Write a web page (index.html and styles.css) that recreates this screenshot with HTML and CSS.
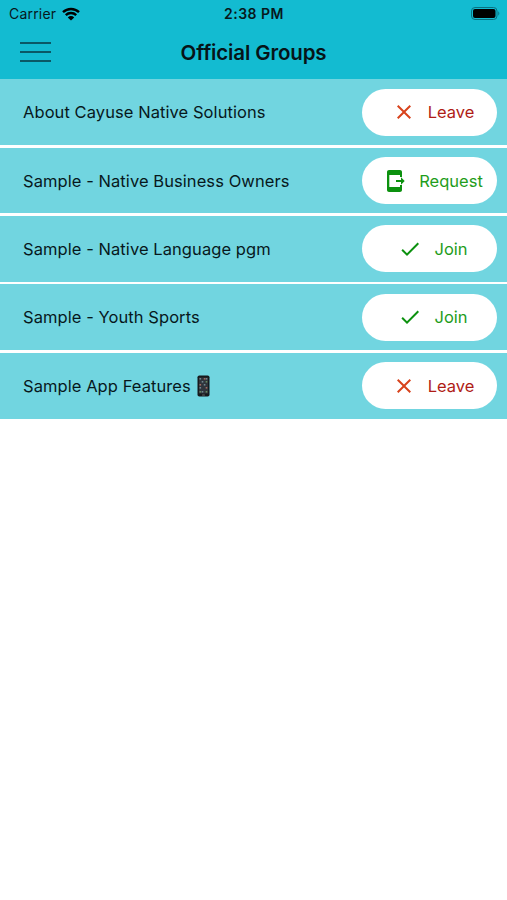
FILE: index.html
```html
<!DOCTYPE html>
<html lang="en">
<head>
  <meta charset="UTF-8">
  <meta name="viewport" content="width=device-width, initial-scale=1">
  <title>Official Groups</title>
  <link rel="stylesheet" href="styles.css">
</head>
<body>
  <svg class="sprite" width="0" height="0">
    <symbol id="close" viewBox="0 0 24 24">
      <path d="M19 6.41 17.59 5 12 10.59 6.41 5 5 6.41 10.59 12 5 17.59 6.41 19 12 13.41 17.59 19 19 17.59 13.41 12z"/>
    </symbol>
    <symbol id="check" viewBox="0 0 24 24">
      <path d="M9 16.17 4.83 12l-1.42 1.41L9 19 21 7l-1.41-1.41z"/>
    </symbol>
    <symbol id="request" viewBox="0 0 24 24">
      <path d="M17 1H6C4.9 1 4 1.9 4 3v18c0 1.1.9 2 2 2h11c1.1 0 2-.9 2-2v-5h-2v2H6.300V6H17v2h2V3c0-1.1-.9-2-2-2z"/>
      <path d="M18 8.300l3.700 3.700-3.700 3.700V13h-5v-2h5z"/>
    </symbol>
  </svg>

  <header class="header">
    <div class="status">
      <div class="carrier">
        <span>Carrier</span>
        <svg class="wifi" viewBox="0 0 18 14">
          <path d="M1 5.2a11.5 11.5 0 0 1 16 0M3.8 8.1a7.4 7.4 0 0 1 10.4 0" fill="none" stroke="#000" stroke-width="2.4"/>
          <path d="M9 13.6 5.8 10.4a4.5 4.5 0 0 1 6.4 0z"/>
        </svg>
      </div>
      <div class="time">2:38 PM</div>
      <svg class="battery" viewBox="0 0 30 14">
        <rect x=".5" y=".5" width="25.500" height="12" rx="3.5" fill="none" stroke="#087181"/>
        <rect x="2" y="2" width="22.5" height="9" rx="2"/>
        <path d="M27.3 4.3q2 2.2 0 4.4z" fill="#087181"/>
      </svg>
    </div>
    <div class="navbar">
      <button class="menu" aria-label="Menu"><span></span><span></span><span></span></button>
      <h1>Official Groups</h1>
    </div>
  </header>

  <ul class="groups">
    <li class="group">
      <span class="name">About Cayuse Native Solutions</span>
      <button class="action leave"><svg class="icon"><use href="#close"/></svg><span>Leave</span></button>
    </li>
    <li class="group">
      <span class="name">Sample - Native Business Owners</span>
      <button class="action request"><svg class="icon"><use href="#request"/></svg><span>Request</span></button>
    </li>
    <li class="group">
      <span class="name">Sample - Native Language pgm</span>
      <button class="action join"><svg class="icon"><use href="#check"/></svg><span>Join</span></button>
    </li>
    <li class="group">
      <span class="name">Sample - Youth Sports</span>
      <button class="action join"><svg class="icon"><use href="#check"/></svg><span>Join</span></button>
    </li>
    <li class="group">
      <span class="name">Sample App Features</span>
      <svg class="phone" viewBox="0 0 13 22">
        <rect x=".5" y=".5" width="12" height="21" rx="1.8" fill="#17191c"/>
        <rect x="2" y="2.5" width="9" height="16" fill="#30343b"/>
        <g fill="#6f8790">
          <rect x="2.5" y="3" width="1.6" height="1.6"/><rect x="8.7" y="3" width="1.6" height="1.6"/>
          <rect x="4.7" y="6" width="1.6" height="1.6"/><rect x="2.5" y="12" width="1.6" height="1.6"/>
          <rect x="6.8" y="9" width="1.6" height="1.6"/><rect x="4.7" y="16" width="1.6" height="1.6"/>
        </g>
        <g fill="#a26a60">
          <rect x="6.8" y="3" width="1.6" height="1.6"/><rect x="2.5" y="9" width="1.6" height="1.6"/>
          <rect x="8.7" y="12" width="1.6" height="1.6"/>
        </g>
        <g fill="#66895e">
          <rect x="8.7" y="6" width="1.6" height="1.6"/><rect x="2.5" y="16" width="1.6" height="1.6"/>
          <rect x="8.7" y="16" width="1.6" height="1.6"/>
        </g>
        <rect x="5" y="19.5" width="3" height="1" rx=".5" fill="#666"/>
      </svg>
      <button class="action leave"><svg class="icon"><use href="#close"/></svg><span>Leave</span></button>
    </li>
  </ul>
</body>
</html>
```
FILE: styles.css
```css
* {
  box-sizing: border-box;
}
body {
  margin: 0;
  background: #fff;
  color: #07181c;
  font-family: Inter, "Liberation Sans", sans-serif;
}
.sprite {
  display: block;
}
.header {
  height: 79.3px;
  background: #13bbd1;
}
.status {
  display: grid;
  grid-template-columns: 1fr auto 1fr;
  align-items: center;
  height: 27px;
  padding: 0 6px 0 9px;
}
.carrier {
  display: flex;
  align-items: center;
  gap: 6px;
  font-size: 14px;
  letter-spacing: 0.2px;
}
.wifi {
  width: 18px;
  height: 14px;
}
.time {
  margin-right: 2px;
  font-size: 14px;
  font-weight: 600;
  letter-spacing: 0.5px;
}
.battery {
  width: 30px;
  height: 14px;
  justify-self: end;
}
.navbar {
  display: grid;
  grid-template-columns: 1fr auto 1fr;
  align-items: center;
  height: 50px;
  padding: 0 20px;
}
.navbar h1 {
  margin: 0;
  font-size: 20.5px;
  font-weight: 600;
  letter-spacing: -0.15px;
  color: #061418;
}
.menu {
  display: flex;
  flex-direction: column;
  gap: 7px;
  width: 31px;
  padding: 0;
  border: none;
  background: none;
}
.menu span {
  height: 2px;
  background: #0a5966;
}
.groups {
  display: flex;
  flex-direction: column;
  gap: 2.6px;
  margin: 0;
  padding: 0;
  list-style: none;
}
.group {
  display: flex;
  align-items: center;
  height: 65.8px;
  padding: 0 10px 0 23px;
  background: #71d5e0;
}
.name {
  font-size: 16.5px;
  letter-spacing: 0.07px;
  white-space: nowrap;
}
.phone {
  width: 13px;
  height: 22px;
  margin-left: 6px;
}
.action {
  display: flex;
  align-items: center;
  justify-content: center;
  gap: 12px;
  width: 135px;
  height: 47px;
  margin-left: auto;
  padding: 0 0 0 7px;
  border: none;
  border-radius: 24px;
  background: #fff;
  font-family: inherit;
  font-size: 16.5px;
}
.icon {
  width: 24px;
  height: 24px;
  fill: currentColor;
}
.leave {
  color: #b01c16;
}
.leave .icon {
  fill: #d8431c;
}
.request,
.join {
  color: #1f9d1c;
}
.request .icon,
.join .icon {
  fill: #0c910f;
}
```
